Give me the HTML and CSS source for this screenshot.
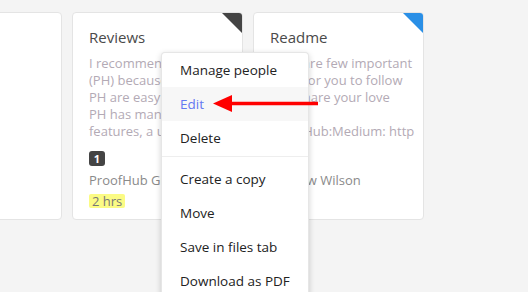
FILE: index.html
```html
<!DOCTYPE html>
<html>
<head>
<meta charset="utf-8">
<link rel="stylesheet" href="styles.css">
</head>
<body>
<div class="board">
  <div class="card"></div>
  <div class="card">
    <span class="corner corner-dark"></span>
    <div class="title">Reviews</div>
    <div class="desc">I recommend ProofHub<br>(PH) because all the<br>PH are easy to use.<br>PH has many useful<br>features, a user friendly</div>
    <div class="badge">1</div>
    <div class="author">ProofHub Guide</div>
    <span class="time">2 hrs</span>
  </div>
  <div class="card">
    <span class="corner corner-blue"></span>
    <div class="title">Readme</div>
    <div class="desc">Here are few important<br>rules for you to follow<br>and share your love<br>&nbsp;<br>ProofHub:Medium: http</div>
    <div class="badge">2</div>
    <div class="author">Andrew Wilson</div>
  </div>
</div>

<div class="menu">
  <div class="item">Manage people</div>
  <div class="item active">Edit</div>
  <div class="item">Delete</div>
  <div class="sep"></div>
  <div class="item">Create a copy</div>
  <div class="item">Move</div>
  <div class="item">Save in files tab</div>
  <div class="item">Download as PDF</div>
</div>

<svg class="arrow" width="120" height="24" viewBox="0 0 120 24">
  <line x1="18" y1="11.5" x2="106" y2="11.5" stroke="#f00" stroke-width="3.5"/>
  <polygon points="1,11.5 20,3 20,20" fill="#f00"/>
</svg>
</body>
</html>
```

FILE: styles.css
```css
html, body {
  margin: 0;
  padding: 0;
}
body {
  width: 528px;
  height: 292px;
  overflow: hidden;
  background: #f4f4f4;
  font-family: "Open Sans", "Noto Sans", sans-serif;
  position: relative;
}
.board {
  display: flex;
  gap: 10px;
  padding-top: 12px;
  margin-left: -109px;
}
.card {
  position: relative;
  box-sizing: border-box;
  flex: 0 0 171px;
  width: 171px;
  height: 208px;
  background: #fff;
  border: 1px solid #e4e4e4;
  border-radius: 4px;
  padding: 14px 16px 0 16px;
  overflow: hidden;
}
.corner {
  position: absolute;
  top: 0;
  right: 0;
  width: 0;
  height: 0;
  border-left: 20px solid transparent;
  border-top: 20px solid #444;
}
.corner-blue {
  border-top-color: #2a8fe6;
}
.title {
  font-size: 15px;
  line-height: 20px;
  color: #4a4a4a;
}
.desc {
  margin-top: 8px;
  font-size: 13px;
  line-height: 17px;
  color: #b3aab5;
  white-space: nowrap;
}
.badge {
  margin-top: 11px;
  width: 16px;
  height: 15px;
  border-radius: 3px;
  background: #444;
  color: #fff;
  font-size: 11px;
  font-weight: 700;
  line-height: 15px;
  text-align: center;
}
.author {
  margin-top: 6px;
  font-size: 13px;
  line-height: 17px;
  color: #8a8a8a;
  white-space: nowrap;
}
.time {
  display: inline-block;
  font-size: 13px;
  line-height: 14px;
  padding: 0 3px;
  border-radius: 2px;
  background: #fbfb84;
  color: #777;
}
.menu {
  position: absolute;
  left: 161px;
  top: 52px;
  width: 146px;
  height: 250px;
  background: #fff;
  border: 1px solid #e6e6e6;
  border-bottom: 0;
  border-radius: 4px 4px 0 0;
  box-shadow: 0 2px 6px rgba(0, 0, 0, 0.18);
  font-size: 13.5px;
  color: #222;
}
.item {
  height: 34px;
  line-height: 34px;
  padding-left: 18px;
  white-space: nowrap;
}
.item.active {
  background: #f7f7f7;
  color: #6478f2;
}
.sep {
  height: 1px;
  background: #eee;
  margin: 1px 0 5px;
}
.arrow {
  position: absolute;
  left: 212px;
  top: 92px;
}
```
